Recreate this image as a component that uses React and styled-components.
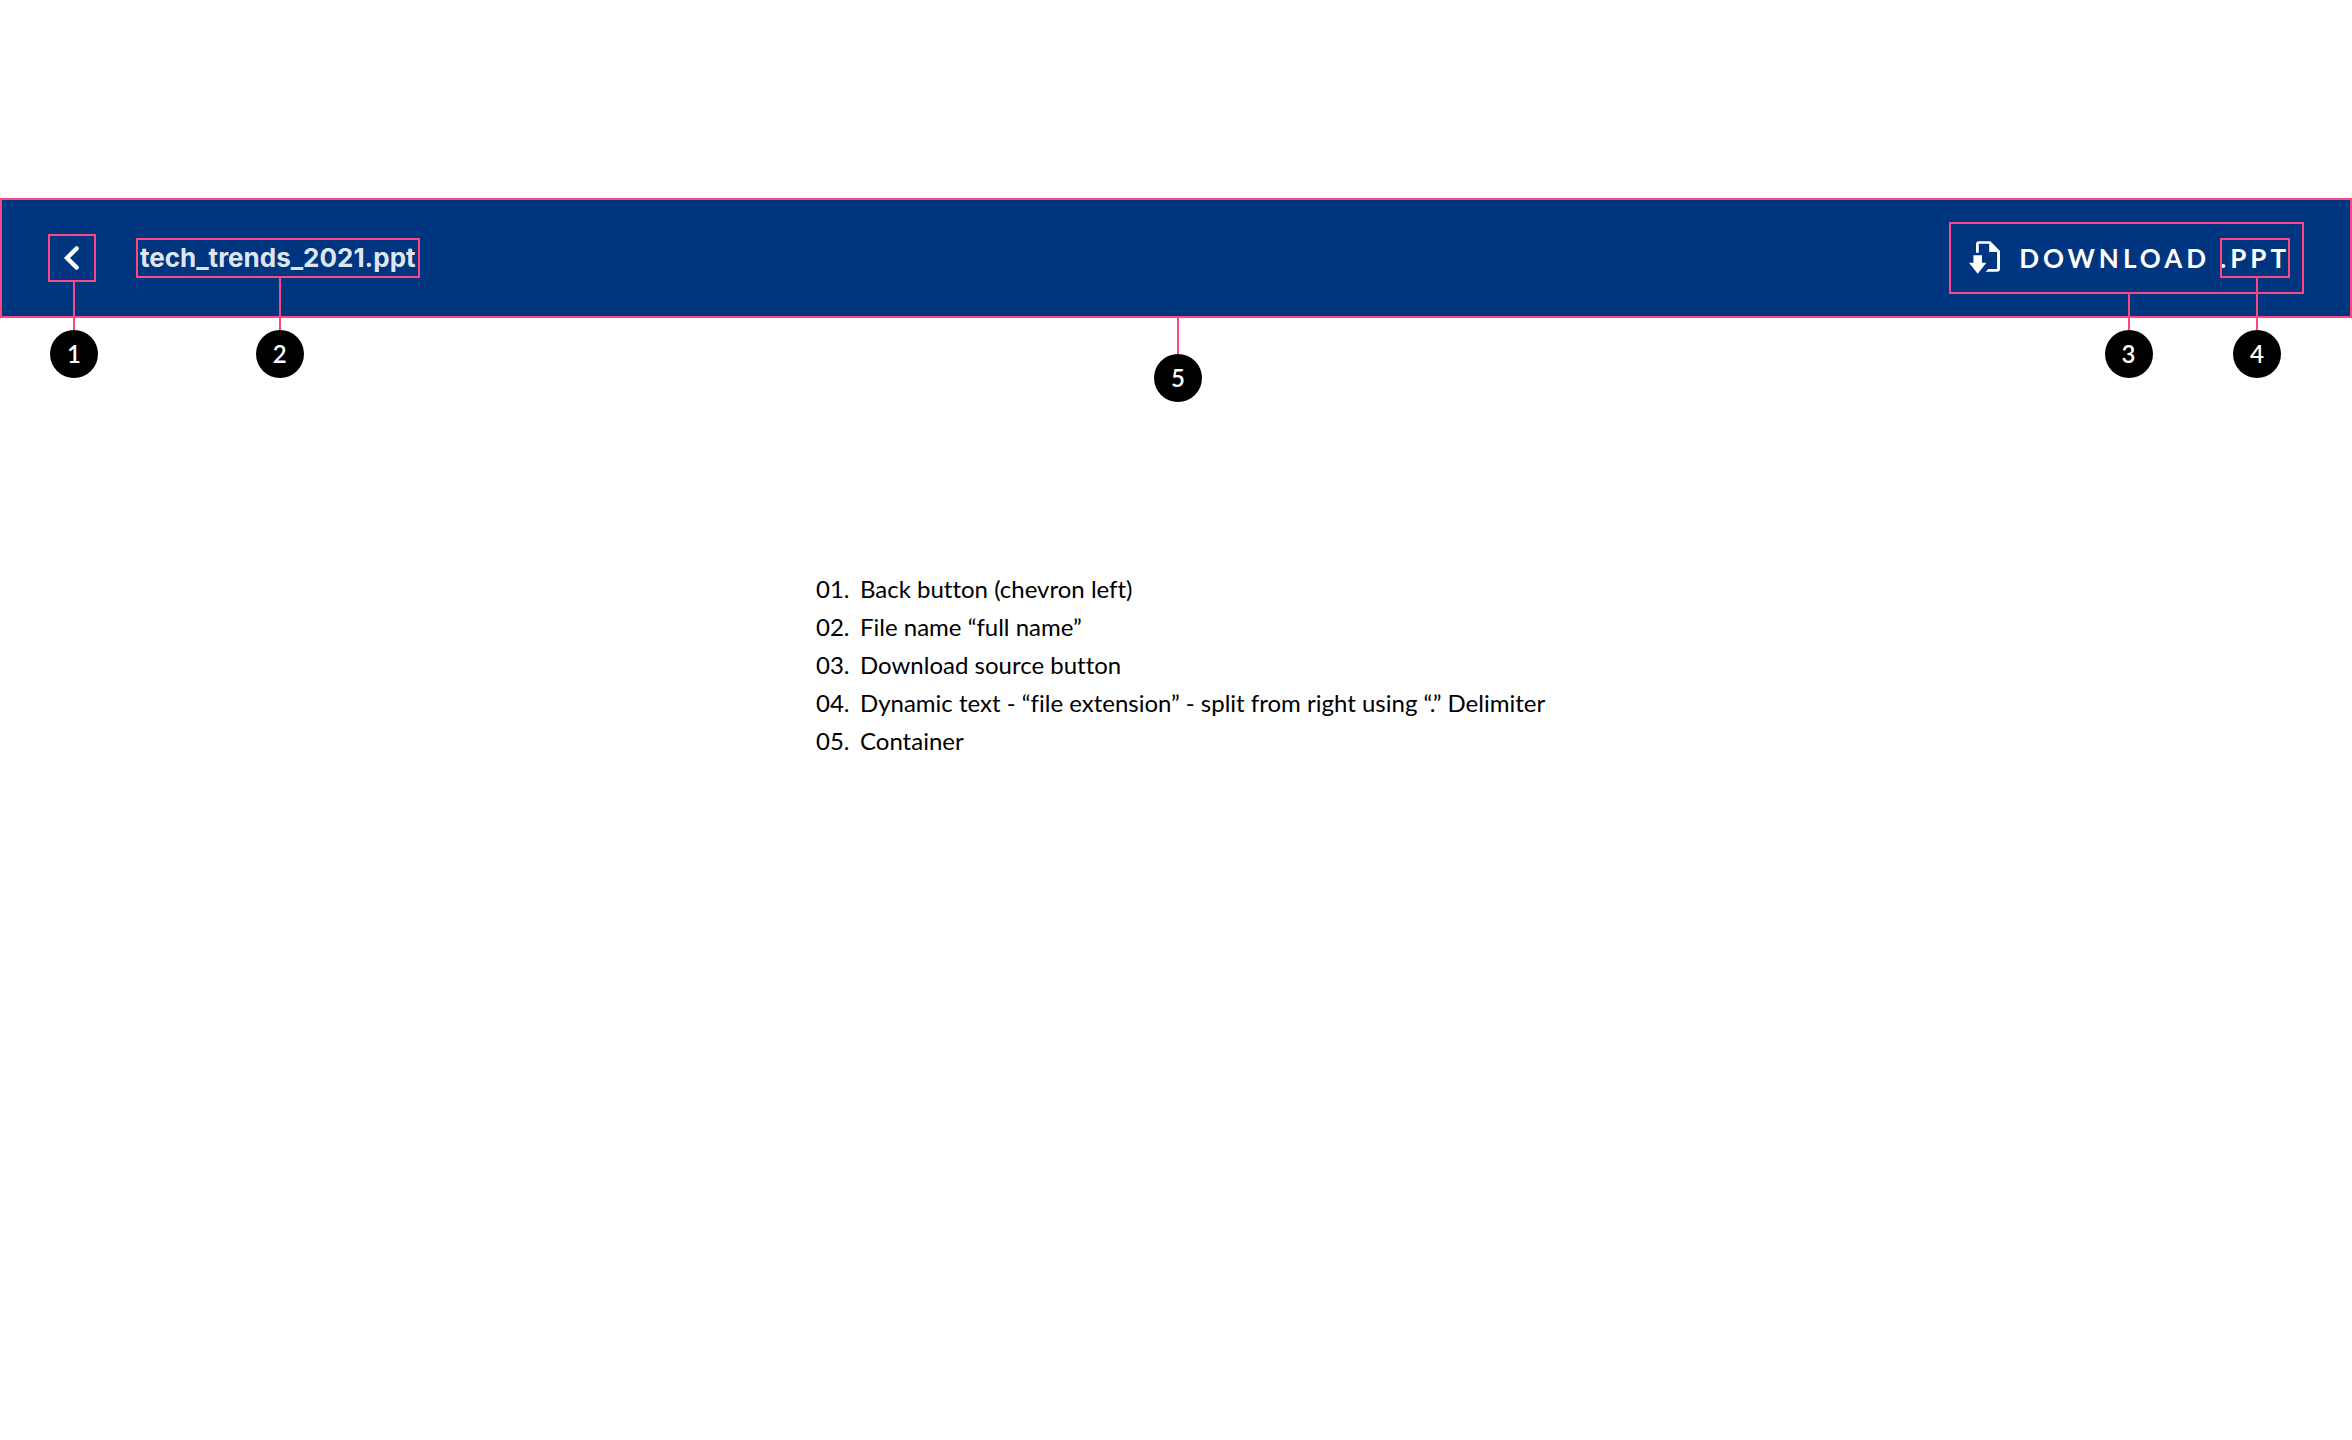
import React from "react";
import styled, { createGlobalStyle } from "styled-components";

const navy = "#003580";
const pink = "#ff4583";

const GlobalStyle = createGlobalStyle`
  *, *::before, *::after { box-sizing: border-box; }
  body {
    margin: 0;
    background: #fff;
    color: #000;
    font-family: Lato, "Open Sans", sans-serif;
    font-size: 24px;
    font-variant-ligatures: none;
  }
`;

const Page = styled.main`
  padding: 198px 0 0;
`;

/* Pink frame drawn on top of a part, without taking any room. */
const Framed = styled.div`
  position: relative;
  outline: 2px solid ${pink};
  outline-offset: -2px;
`;

const Toolbar = styled(Framed).attrs({ as: "header" })`
  display: flex;
  align-items: center;
  gap: 40px;
  padding: 24px 48px;
  background: ${navy};
  color: #fff;
`;

const BackButton = styled(Framed).attrs({ as: "button" })`
  display: block;
  width: 48px;
  height: 48px;
  padding: 0;
  border: 0;
  background: none;
  color: inherit;
  cursor: pointer;

  svg { display: block; }
`;

const FileName = styled(Framed).attrs({ as: "h1" })`
  margin: 0;
  padding: 0 4px;
  font: 700 26px/40px Inter, "Open Sans", sans-serif;
  color: rgba(255, 255, 255, 0.9);
`;

const DownloadButton = styled(Framed).attrs({ as: "button" })`
  display: flex;
  align-items: center;
  height: 72px;
  margin-left: auto;
  padding: 0 14px 0 16px;
  border: 0;
  background: none;
  color: inherit;
  font: 700 26px/40px Lato, "Open Sans", sans-serif;
  letter-spacing: 4px;
  text-transform: uppercase;
  cursor: pointer;
`;

const DownloadLabel = styled.span`
  margin: 0 10px 0 18px;
`;

const Extension = styled(Framed).attrs({ as: "span" })``;

const Callout = styled.span`
  position: absolute;
  top: 100%;
  left: calc(50% + 2px);
  transform: translateX(-50%);
  display: flex;
  flex-direction: column;
  align-items: center;
  letter-spacing: 0;

  &::before {
    content: "";
    width: 2px;
    height: ${(p) => p.$drop}px;
    background: ${pink};
  }
`;

const Marker = styled.span`
  display: grid;
  place-items: center;
  width: 48px;
  height: 48px;
  border-radius: 50%;
  background: #000;
  color: #fff;
  font: 600 24px/48px Lato, "Open Sans", sans-serif;
`;

const Legend = styled.ol`
  max-width: 720px;
  margin: 252px auto 0;
  padding: 0;
  list-style: none;
  white-space: nowrap;
  line-height: 38px;
`;

const LegendItem = styled.li`
  display: grid;
  grid-template-columns: 44px 1fr;
`;

const legend = [
  "Back button (chevron left)",
  "File name “full name”",
  "Download source button",
  "Dynamic text - “file extension” - split from right using “.” Delimiter",
  "Container",
];

function Note({ n, drop }) {
  return (
    <Callout $drop={drop}>
      <Marker>{n}</Marker>
    </Callout>
  );
}

function ChevronLeft() {
  return (
    <svg width="48" height="48" viewBox="0 0 48 48" fill="none" aria-hidden="true">
      <path d="M28.7 14.4 19 24l9.7 9.6" stroke="currentColor" strokeWidth="4.3" strokeLinecap="round" />
    </svg>
  );
}

function FileDownload() {
  return (
    <svg width="36" height="36" viewBox="0 0 36 36" fill="currentColor" aria-hidden="true">
      <path d="M11 12.7V4.2a3 3 0 0 1 3-3h11.4L35 11v17.7a3 3 0 0 1-3 3H20.6l2.8-2.6h8.7V12H24.2V3.8H13.8v8.9z" />
      <path d="M8.4 15.3h8.6v7.4h4.4l-8.7 11-8.7-11h4.4z" />
    </svg>
  );
}

export default function App() {
  const fileName = "tech_trends_2021.ppt";
  const extension = fileName.slice(fileName.lastIndexOf("."));

  return (
    <Page>
      <GlobalStyle />
      <Toolbar>
        <BackButton type="button" aria-label="Back">
          <ChevronLeft />
          <Note n={1} drop={48} />
        </BackButton>
        <FileName>
          {fileName}
          <Note n={2} drop={52} />
        </FileName>
        <DownloadButton type="button">
          <FileDownload />
          <DownloadLabel>Download</DownloadLabel>
          <Extension>
            {extension}
            <Note n={4} drop={52} />
          </Extension>
          <Note n={3} drop={36} />
        </DownloadButton>
        <Note n={5} drop={36} />
      </Toolbar>

      <Legend>
        {legend.map((text, i) => (
          <LegendItem key={text}>
            <span>{`0${i + 1}.`}</span>
            <span>{text}</span>
          </LegendItem>
        ))}
      </Legend>
    </Page>
  );
}
